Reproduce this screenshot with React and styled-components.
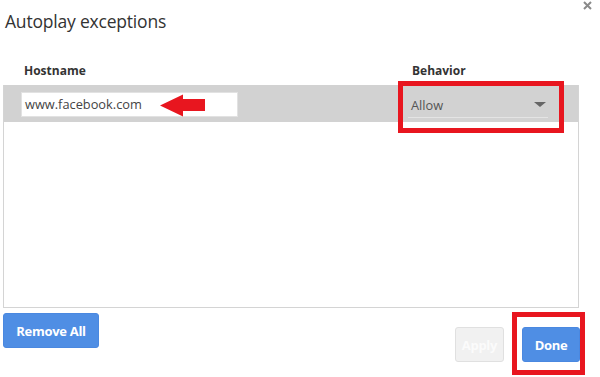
import React from 'react'
import styled, { createGlobalStyle } from 'styled-components';

const Global = createGlobalStyle`
  body {
    margin: 0;
    background: #fff;
  }
`;

export default function App() {
  return (
    <Page>
      <Global />
      <TitleRow>
        <Title>Autoplay exceptions</Title>
        <Close width="9" height="9" viewBox="0 0 9 9">
          <path d="M1 1 L8 8 M8 1 L1 8" stroke="#8a8a8a" strokeWidth="2" />
        </Close>
      </TitleRow>
      <Columns>
        <ColHead>Hostname</ColHead>
        <ColHead>Behavior</ColHead>
      </Columns>
      <TableBox>
        <Row>
          <HostInput>www.facebook.com</HostInput>
          <Select>
            <span>Allow</span>
            <Caret />
          </Select>
        </Row>
      </TableBox>
      <Footer>
        <Button $w={96}>Remove All</Button>
        <Actions>
          <Button $w={49} disabled>Apply</Button>
          <Button $w={58}>Done</Button>
        </Actions>
      </Footer>

      <Arrow width="46" height="23" viewBox="0 0 46 23">
        <polygon points="0,11.5 23,0.5 23,5 45,5 45,17 23,17 23,22.5" fill="#e8161f" />
      </Arrow>
      <Highlight $left={398} $top={81} $width={166} $height={52} />
      <Highlight $left={512} $top={312} $width={73} $height={63} />
    </Page>
  )
}

const Page = styled.div`
position: relative;
width: 600px;
height: 377px;
overflow: hidden;
font-family: "Open Sans", "Noto Sans", sans-serif;
color: #333;
`;

const TitleRow = styled.div`
display: flex;
justify-content: space-between;
align-items: flex-start;
padding: 0 8px 0 5px;
`;

const Title = styled.h1`
margin: 9px 0 0;
font-size: 17.5px;
font-weight: 400;
color: #333;
letter-spacing: -0.2px;
`;

const Close = styled.svg`
display: block;
margin-top: 1px;
`;

const Columns = styled.div`
display: grid;
grid-template-columns: 388px 1fr;
padding: 30px 0 0 24px;
height: 22px;
`;

const ColHead = styled.div`
font-size: 12px;
font-weight: 700;
color: #333;
line-height: 16px;
`;

const TableBox = styled.div`
margin: 0 21px 0 3px;
height: 222px;
border: 1px solid #d4d4d4;
border-top: none;
`;

const Row = styled.div`
height: 37px;
background: #d2d2d2;
display: flex;
align-items: flex-start;
padding: 7px 0 0 17px;
box-sizing: border-box;
`;

const HostInput = styled.div`
width: 217px;
height: 25px;
box-sizing: border-box;
background: #fff;
border: 1px solid #e2e2e2;
font-size: 12.8px;
line-height: 23px;
padding-left: 3px;
color: #444;
`;

const Select = styled.div`
margin-left: 170px;
width: 140px;
height: 26px;
box-sizing: border-box;
border-bottom: 1px solid #e4e4e4;
display: flex;
justify-content: space-between;
align-items: center;
padding: 0 2px 0 3px;
font-size: 12.8px;
color: #555;
`;

const Caret = styled.span`
width: 0;
height: 0;
border-left: 6px solid transparent;
border-right: 6px solid transparent;
border-top: 5px solid #666;
`;

const Footer = styled.div`
display: flex;
justify-content: space-between;
align-items: flex-start;
padding: 5px 20px 0 3px;
`;

const Actions = styled.div`
display: flex;
gap: 18px;
margin-top: 14px;
`;

const Button = styled.button`
font-family: "Open Sans", "Noto Sans", sans-serif;
font-size: 13px;
font-weight: 700;
width: ${p => p.$w}px;
height: 35px;
padding: 0;
border-radius: 3px;
border: 1px solid ${p => p.disabled ? '#e0e0e0' : '#4a88e0'};
background: ${p => p.disabled ? '#f1f1f1' : '#4f8ee4'};
color: ${p => p.disabled ? '#fbfbfb' : '#fff'};
letter-spacing: -0.3px;
`;

const Arrow = styled.svg`
position: absolute;
left: 160px;
top: 94px;
`;

const Highlight = styled.div`
position: absolute;
left: ${p => p.$left}px;
top: ${p => p.$top}px;
width: ${p => p.$width}px;
height: ${p => p.$height}px;
box-sizing: border-box;
border: 5px solid #e8161f;
`;
